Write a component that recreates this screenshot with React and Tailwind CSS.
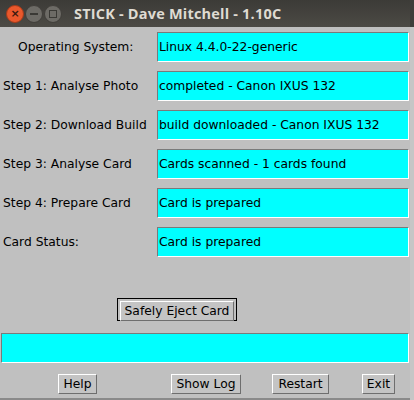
import React from 'react';

const rows = [
    { label: 'Operating System:', value: 'Linux 4.4.0-22-generic', indent: 'pl-[18px]' },
    { label: 'Step 1: Analyse Photo', value: 'completed - Canon IXUS 132', indent: 'pl-[3px]' },
    { label: 'Step 2: Download Build', value: 'build downloaded - Canon IXUS 132', indent: 'pl-[3px]' },
    { label: 'Step 3: Analyse Card', value: 'Cards scanned - 1 cards found', indent: 'pl-[3px]' },
    { label: 'Step 4: Prepare Card', value: 'Card is prepared', indent: 'pl-[3px]' },
    { label: 'Card Status:', value: 'Card is prepared', indent: 'pl-[3px]' },
];

function Field({ children, className = '' }) {
    // sunken swing text field
    return (
        <div
            className={`bg-[#00ffff] border border-t-[#7a7a7a] border-l-[#7a7a7a] border-b-white border-r-white flex items-center pl-[1px] text-[12.3px] text-black whitespace-nowrap overflow-hidden ${className}`}
        >
            {children}
        </div>
    );
}

function Button({ children, className = '' }) {
    return (
        <div
            className={`bg-[#c4c4c4] border border-t-white border-l-white border-b-[#6e6e6e] border-r-[#6e6e6e] h-[20px] flex items-center justify-center text-[12.3px] text-black whitespace-nowrap ${className}`}
        >
            {children}
        </div>
    );
}

export default function App() {
    return (
        <div className="w-[414px] h-[400px] flex bg-[#c0c0c0] font-['DejaVu_Sans',sans-serif] overflow-hidden">
            <div className="w-[410px] h-[400px] flex flex-col">
                {/* title bar */}
                <div className="h-[27px] bg-gradient-to-b from-[#3c3b37] to-[#4c4a45] flex items-center pl-[6px] gap-[1px]">
                    <div className="w-[18px] h-[18px] rounded-full bg-[#e9582c] border border-[#a63b1a] flex items-center justify-center text-[#3a1a10] text-[11px] leading-none font-bold">
                        ×
                    </div>
                    <div className="w-[18px] h-[18px] rounded-full bg-[#6d6b66] border border-[#403e3a] flex items-center justify-center">
                        <div className="w-[8px] h-[2px] bg-[#3a3935]" />
                    </div>
                    <div className="w-[18px] h-[18px] rounded-full bg-[#6d6b66] border border-[#403e3a] flex items-center justify-center">
                        <div className="w-[8px] h-[8px] border-[1.5px] border-[#3a3935]" />
                    </div>
                    <span className="ml-[11px] text-[#dfdbd2] text-[14.5px] font-bold font-['Open_Sans',sans-serif] tracking-[0.2px]">
                        STICK - Dave Mitchell - 1.10C
                    </span>
                </div>

                <div className="flex flex-col gap-[9px] pt-[5px]">
                    {rows.map((row, i) => (
                        <div key={i} className="flex h-[30px]">
                            <div className={`w-[157px] flex items-center text-[12.3px] text-black whitespace-nowrap ${row.indent}`}>
                                {row.label}
                            </div>
                            <Field className="w-[252px] h-[30px]">{row.value}</Field>
                        </div>
                    ))}
                </div>

                <div className="flex justify-start pl-[117px] mt-[41px]">
                    <div className="border border-black p-[2px] h-[23px] w-[120px] flex">
                        <Button className="h-[17px] w-full">Safely Eject Card</Button>
                    </div>
                </div>

                <Field className="ml-[1px] w-[408px] h-[30px] mt-[12px]" />

                <div className="flex mt-[11px] h-[20px]">
                    <Button className="ml-[58px] w-[39px]">Help</Button>
                    <Button className="ml-[74px] w-[70px]">Show Log</Button>
                    <Button className="ml-[31px] w-[57px]">Restart</Button>
                    <Button className="ml-[33px] w-[33px]">Exit</Button>
                </div>
                <div className="flex-1" />
                <div className="h-[2px] bg-[#8a8a8a]" />
            </div>
            <div className="w-[4px] h-[400px] flex flex-col">
                <div className="h-[27px] bg-[#3f3e3a]" />
                <div className="flex-1 bg-[#c6c6c6]" />
            </div>
        </div>
    );
}
